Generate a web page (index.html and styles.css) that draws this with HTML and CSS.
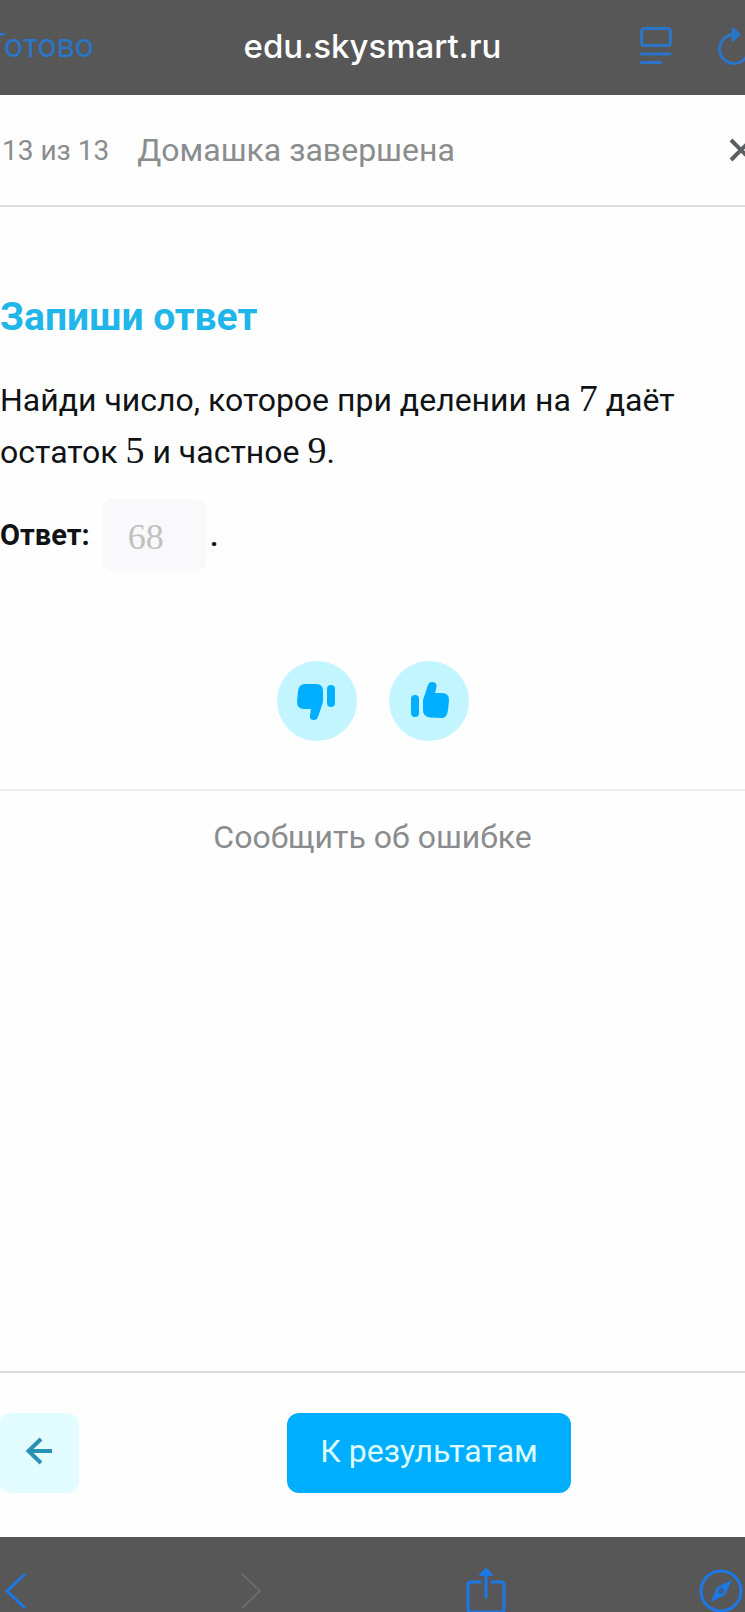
FILE: index.html
```html
<!DOCTYPE html>
<html lang="ru">
<head>
    <meta charset="UTF-8">
    <meta name="viewport" content="width=device-width, initial-scale=1.0">
    <title>Skysmart</title>
    <link rel="stylesheet" href="styles.css">
</head>
<body>
    <div class="app">
        <div class="browser-bar">
            <a href="#" class="done">Готово</a>
            <span class="url">edu.skysmart.ru</span>
            <div class="browser-actions">
                <button class="icon-btn" aria-label="Режим чтения">
                    <svg width="34" height="40" viewBox="0 0 34 40" fill="none" stroke="#2a75c9" stroke-width="3" stroke-linecap="round">
                        <rect x="2.5" y="2.5" width="29" height="17" rx="3"/>
                        <path d="M2.5 28H31M2.5 36.500H22"/>
                    </svg>
                </button>
                <button class="icon-btn" aria-label="Обновить">
                    <svg width="34" height="40" viewBox="0 0 34 40" fill="none" stroke="#2a75c9" stroke-width="3" stroke-linecap="round" stroke-linejoin="round">
                        <path d="M20 8.500H17A14.500 14.500 0 1 0 31.500 23"/>
                        <path d="M16 3L22 8.500L16 14Z" fill="#2a75c9"/>
                    </svg>
                </button>
            </div>
        </div>

        <header class="header">
            <span class="counter">13 из 13</span>
            <span>Домашка завершена</span>
            <button class="icon-btn close" aria-label="Закрыть">
                <svg width="24" height="24" viewBox="0 0 24 24" fill="none" stroke="#5b5f61" stroke-width="4">
                    <path d="M2 2L22 22M22 2L2 22"/>
                </svg>
            </button>
        </header>

        <main class="content">
            <h1>Запиши ответ</h1>
            <p class="task">Найди число, которое при делении на <span class="num">7</span> даёт остаток <span class="num">5</span> и частное <span class="num">9</span>.</p>
            <div class="answer">
                <label for="answer">Ответ:</label>
                <input id="answer" type="text" value="68" disabled>
                <span>.</span>
            </div>
            <div class="rating">
                <button aria-label="Не нравится">
                    <svg width="40" height="40" viewBox="0 0 40 40" fill="#00aeff">
                        <path d="M8 3H19Q26 3 26 10V19Q26 22 25 24L21 36Q20 39 17 39Q12 39 13 34L14 28H7Q0 28 0 21L1 10Q2 3 8 3Z"/>
                        <rect x="30" y="4" width="8" height="22" rx="4"/>
                    </svg>
                </button>
                <button aria-label="Нравится">
                    <svg width="40" height="40" viewBox="0 0 40 40" fill="#00aeff">
                        <path d="M33 37L21 36.500Q14 36 14 29V20Q14 18 15 16L19 4Q20 1 23 1Q28 1 27.500 6L26 12H33Q40 12 40 19L39 29Q38 37 33 37Z"/>
                        <rect x="2" y="14" width="8" height="22" rx="4"/>
                    </svg>
                </button>
            </div>
            <div class="report">
                <a href="#">Сообщить об ошибке</a>
            </div>
        </main>

        <footer class="footer">
            <button class="back" aria-label="Назад">
                <svg width="28" height="28" viewBox="0 0 28 28" fill="none" stroke="#2991b4" stroke-width="4">
                    <path d="M27 14H3M16 2L3.500 14L16 26"/>
                </svg>
            </button>
            <button class="results">К результатам</button>
        </footer>

        <nav class="toolbar">
            <button class="icon-btn" aria-label="Страница назад">
                <svg width="22" height="38" viewBox="0 0 22 38" fill="none" stroke="#1d78e6" stroke-width="3">
                    <path d="M20 2L2 19L20 36"/>
                </svg>
            </button>
            <button class="icon-btn" aria-label="Страница вперёд">
                <svg width="22" height="38" viewBox="0 0 22 38" fill="none" stroke="#6b6b6b" stroke-width="2">
                    <path d="M2 2L20 19L2 36"/>
                </svg>
            </button>
            <button class="icon-btn" aria-label="Поделиться">
                <svg width="40" height="48" viewBox="0 0 40 48" fill="none" stroke="#1d78e6" stroke-width="3" stroke-linecap="round" stroke-linejoin="round">
                    <path d="M14 15H5Q2 15 2 18V42Q2 45 5 45H35Q38 45 38 42V18Q38 15 35 15H26M20 30V4"/>
                    <path d="M14 8L20 2L26 8Z" fill="#1d78e6" stroke-width="2"/>
                </svg>
            </button>
            <button class="icon-btn" aria-label="Открыть в Safari">
                <svg width="44" height="44" viewBox="0 0 44 44" fill="none" stroke="#1d78e6" stroke-width="3">
                    <circle cx="22" cy="22" r="20"/>
                    <path d="M33 11L26 26L12 33L18 18Z" fill="#1d78e6" stroke="none"/>
                    <circle cx="22" cy="22" r="3" fill="#3a5f90" stroke="none"/>
                </svg>
            </button>
        </nav>
    </div>
</body>
</html>
```
FILE: styles.css
```css
html, body {
    margin: 0;
    padding: 0;
    background: #fefefe;
    font-family: Inter, "Liberation Sans", sans-serif;
}

a {
    text-decoration: none;
}

button {
    border: none;
    padding: 0;
    font-family: inherit;
    cursor: pointer;
}

svg {
    display: block;
}

.app {
    height: 100vh;
    display: flex;
    flex-direction: column;
    overflow: hidden;
}

.icon-btn {
    background: none;
}

.browser-bar {
    height: 91px;
    margin: 0 -12px;
    padding-bottom: 4px;
    flex-shrink: 0;
    display: grid;
    grid-template-columns: 1fr auto 1fr;
    align-items: center;
    background: #575757;
}

.done {
    color: #2a75c9;
    font-size: 32px;
}

.url {
    color: white;
    font-size: 33px;
    font-weight: 500;
    line-height: 40px;
}

.browser-actions {
    display: flex;
    justify-content: flex-end;
    gap: 44px;
    padding-right: 6px;
}

.header {
    height: 110px;
    flex-shrink: 0;
    display: flex;
    align-items: center;
    gap: 28px;
    padding-left: 2px;
    border-bottom: 2px solid #dcdcdc;
    color: #8a8c8d;
    font-family: Roboto, sans-serif;
    font-size: 32px;
}

.counter {
    font-size: 28px;
}

.close {
    margin-left: auto;
    margin-right: -8px;
}

.content {
    flex: 1;
    font-family: Roboto, sans-serif;
    color: #101315;
    font-size: 32px;
    font-weight: 500;
}

h1 {
    margin: 84px 0 0;
    color: #20b6ea;
    font-size: 39px;
    line-height: 52px;
    font-weight: 700;
}

.task {
    margin: 31px 0 0;
    line-height: 52px;
    font-weight: 400;
}

.num {
    font-family: "Liberation Serif", serif;
    font-size: 38px;
    line-height: 40px;
}

.answer {
    display: flex;
    align-items: center;
    margin-top: 21px;
}

.answer label {
    font-size: 29px;
    font-weight: 700;
}

.answer input {
    box-sizing: border-box;
    width: 104px;
    height: 72px;
    margin: 0 4px 0 12px;
    padding: 4px 26px 0;
    border: none;
    border-radius: 10px;
    background: #f9f9fc;
    color: #c0c0c2;
    font-family: "Liberation Serif", serif;
    font-size: 36px;
}

.rating {
    display: flex;
    justify-content: center;
    gap: 32px;
    padding: 90px 0 48px;
    border-bottom: 2px solid #f0f0f1;
}

.rating button {
    width: 80px;
    height: 80px;
    display: flex;
    align-items: center;
    justify-content: center;
    border-radius: 50%;
    background: #c2f5ff;
}

.report {
    padding-top: 20px;
    text-align: center;
    line-height: 52px;
    font-weight: 400;
}

.report a {
    color: #8a8c8d;
}

.footer {
    flex-shrink: 0;
    display: flex;
    gap: 208px;
    padding: 40px 0 44px;
    border-top: 2px solid #d8d9da;
}

.back {
    width: 80px;
    height: 80px;
    margin-left: -1px;
    padding-bottom: 4px;
    box-sizing: border-box;
    display: flex;
    align-items: center;
    justify-content: center;
    border-radius: 12px;
    background: #e2fcff;
}

.results {
    width: 284px;
    height: 80px;
    padding-bottom: 4px;
    border-radius: 12px;
    background: #00aeff;
    color: #dcfbff;
    font-family: Roboto, sans-serif;
    font-size: 32px;
}

.toolbar {
    height: 43px;
    margin: 0 -6px;
    padding: 32px 8px 0 0;
    flex-shrink: 0;
    display: flex;
    align-items: flex-start;
    justify-content: space-between;
    background: #575757;
}

.toolbar .icon-btn {
    width: 44px;
    height: 44px;
    display: flex;
    align-items: center;
    justify-content: center;
}
```
